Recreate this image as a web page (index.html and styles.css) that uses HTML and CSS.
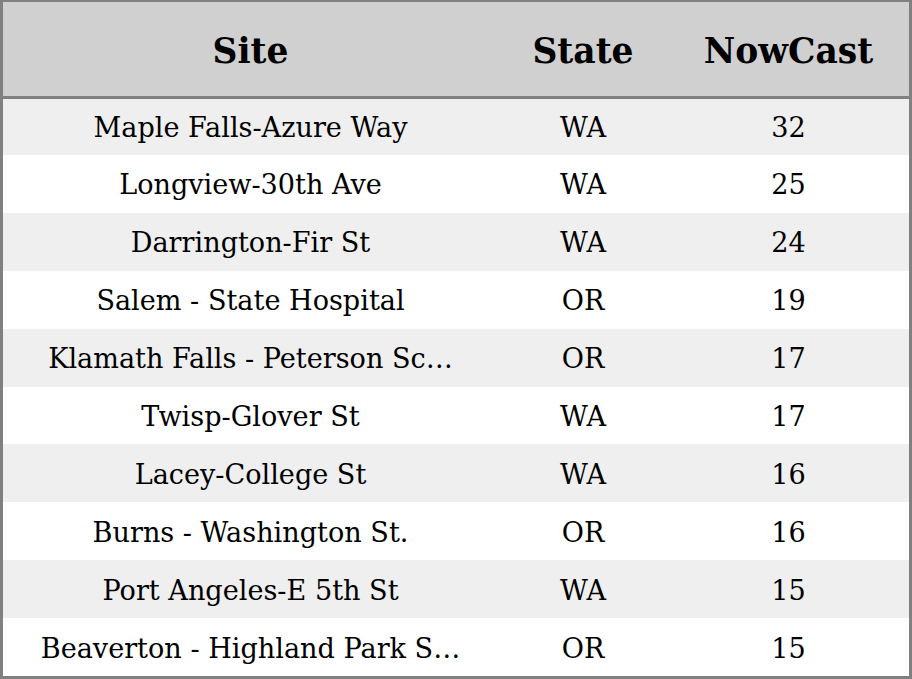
FILE: index.html
```html
<!DOCTYPE html>
<html>
<head>
<meta charset="utf-8">
<link rel="stylesheet" href="styles.css">
</head>
<body>
<div class="table">
  <div class="row head">
    <div class="cell site">Site</div>
    <div class="cell state">State</div>
    <div class="cell now">NowCast</div>
  </div>
  <div class="body">
    <div class="row odd"><div class="cell site">Maple Falls-Azure Way</div><div class="cell state">WA</div><div class="cell now">32</div></div>
    <div class="row"><div class="cell site">Longview-30th Ave</div><div class="cell state">WA</div><div class="cell now">25</div></div>
    <div class="row odd"><div class="cell site">Darrington-Fir St</div><div class="cell state">WA</div><div class="cell now">24</div></div>
    <div class="row"><div class="cell site">Salem - State Hospital</div><div class="cell state">OR</div><div class="cell now">19</div></div>
    <div class="row odd"><div class="cell site">Klamath Falls - Peterson Sc…</div><div class="cell state">OR</div><div class="cell now">17</div></div>
    <div class="row"><div class="cell site">Twisp-Glover St</div><div class="cell state">WA</div><div class="cell now">17</div></div>
    <div class="row odd"><div class="cell site">Lacey-College St</div><div class="cell state">WA</div><div class="cell now">16</div></div>
    <div class="row"><div class="cell site">Burns - Washington St.</div><div class="cell state">OR</div><div class="cell now">16</div></div>
    <div class="row odd"><div class="cell site">Port Angeles-E 5th St</div><div class="cell state">WA</div><div class="cell now">15</div></div>
    <div class="row"><div class="cell site">Beaverton - Highland Park S…</div><div class="cell state">OR</div><div class="cell now">15</div></div>
  </div>
</div>
</body>
</html>
```
FILE: styles.css
```css
html, body {
  margin: 0;
  padding: 0;
  background: #ffffff;
}
body {
  width: 912px;
  height: 679px;
  font-family: "DejaVu Serif", serif;
  color: #000;
}
.table {
  box-sizing: border-box;
  width: 912px;
  height: 679px;
  border: 3px solid #808080;
  border-top-width: 2px;
  display: flex;
  flex-direction: column;
}
.row {
  display: grid;
  grid-template-columns: 495px 170px 1fr;
  align-items: center;
}
.head {
  box-sizing: border-box;
  height: 97px;
  padding-top: 4px;
  flex: none;
  background: #d0d0d0;
  border-bottom: 3px solid #808080;
  font-weight: bold;
  font-size: 34.5px;
}
.body {
  flex: 1;
  display: grid;
  grid-template-rows: 56fr repeat(9, 58fr);
}
.body .row {
  font-size: 27.1px;
  padding-top: 2px;
  background: #ffffff;
}
.body .row.odd {
  background: #efefef;
}
.cell {
  text-align: center;
  white-space: nowrap;
}
```
